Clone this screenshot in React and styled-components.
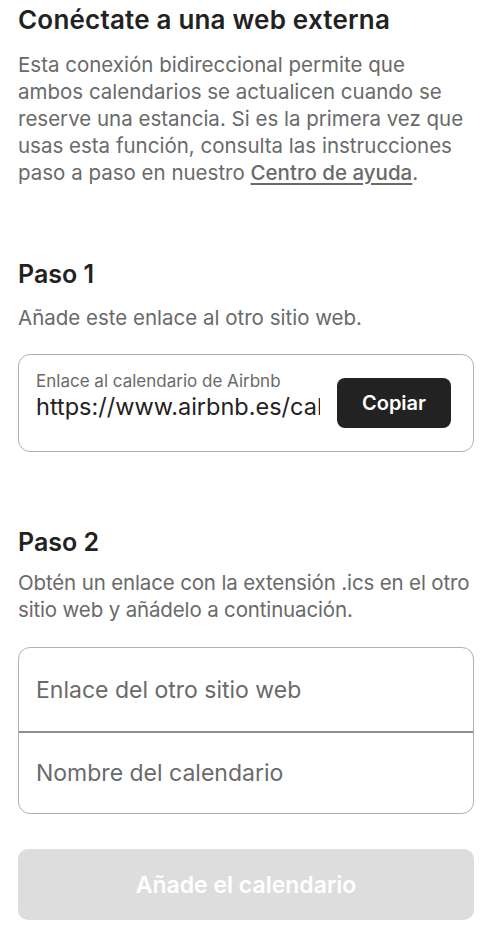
import React from 'react'
import styled, { createGlobalStyle } from 'styled-components'

const GlobalStyle = createGlobalStyle`
  body {
    margin: 0;
    background: #ffffff;
    font-family: Inter, "Noto Sans", sans-serif;
    color: #222222;
  }
`

const Page = styled.div`
  width: 456px;
  padding: 4px 16px 20px 18px;
`

const Title = styled.h1`
  margin: 0;
  font-size: 26px;
  line-height: 32px;
  font-weight: 600;
  color: #222222;
  letter-spacing: 0.2px;
  white-space: nowrap;
`

const Text = styled.p`
  margin: ${props => props.top || 0}px 0 0;
  font-size: 20.5px;
  line-height: 27px;
  color: #6a6a6a;
  font-weight: 400;
  letter-spacing: ${props => props.tight ? '-0.15px' : '0'};
  white-space: nowrap;
`

const HelpLink = styled.a`
  color: #6a6a6a;
  font-weight: 500;
  text-decoration: underline;
  text-underline-offset: 3px;
`

const StepTitle = styled.h2`
  margin: ${props => props.top}px 0 0;
  font-size: 25px;
  line-height: 30px;
  font-weight: 600;
  color: #222222;
`

const LinkBox = styled.div`
  margin-top: 23px;
  border: 1px solid #b0b0b0;
  border-radius: 12px;
  height: 98px;
  box-sizing: border-box;
  display: flex;
  align-items: center;
  padding: 0 22px 0 17px;
  gap: 17px;
`

const LinkInfo = styled.div`
  flex: 1;
  min-width: 0;
  padding-bottom: 15px;
`

const LinkLabel = styled.div`
  font-size: 17px;
  line-height: 22px;
  color: #6a6a6a;
  white-space: nowrap;
`

const LinkUrl = styled.div`
  font-size: 23.5px;
  line-height: 30px;
  color: #222222;
  white-space: nowrap;
  overflow: hidden;
`

const CopyButton = styled.button`
  flex: none;
  width: 114px;
  height: 50px;
  border: none;
  border-radius: 8px;
  background: #222222;
  color: #ffffff;
  font-family: inherit;
  font-size: 20px;
  font-weight: 600;
`

const FieldGroup = styled.div`
  margin-top: 24px;
  border: 1px solid #b0b0b0;
  border-radius: 12px;
  overflow: hidden;
`

const Field = styled.div`
  height: ${props => props.divided ? 82 : 83}px;
  display: flex;
  align-items: center;
  padding: 0 17px;
  box-sizing: border-box;
  font-size: 23px;
  color: #6a6a6a;
  border-top: ${props => props.divided ? '2px solid #8f8f8f' : 'none'};
`

const AddButton = styled.button`
  display: block;
  width: 100%;
  margin-top: 35px;
  height: 71px;
  border: none;
  border-radius: 10px;
  background: #dddddd;
  color: #ffffff;
  font-family: inherit;
  font-size: 23px;
  font-weight: 600;
`

export default function App() {
  return (
    <Page>
      <GlobalStyle />
      <Title>Conéctate a una web externa</Title>
      <Text top={15}>
        Esta conexión bidireccional permite que<br />
        ambos calendarios se actualicen cuando se<br />
        reserve una estancia. Si es la primera vez que<br />
        usas esta función, consulta las instrucciones<br />
        paso a paso en nuestro <HelpLink>Centro de ayuda</HelpLink>.
      </Text>

      <StepTitle top={73}>Paso 1</StepTitle>
      <Text top={15}>Añade este enlace al otro sitio web.</Text>
      <LinkBox>
        <LinkInfo>
          <LinkLabel>Enlace al calendario de Airbnb</LinkLabel>
          <LinkUrl>https://www.airbnb.es/calendar/ical/12345678.ics</LinkUrl>
        </LinkInfo>
        <CopyButton>Copiar</CopyButton>
      </LinkBox>

      <StepTitle top={75}>Paso 2</StepTitle>
      <Text top={12} tight>
        Obtén un enlace con la extensión .ics en el otro<br />
        sitio web y añádelo a continuación.
      </Text>
      <FieldGroup>
        <Field>Enlace del otro sitio web</Field>
        <Field divided>Nombre del calendario</Field>
      </FieldGroup>
      <AddButton>Añade el calendario</AddButton>
    </Page>
  )
}
